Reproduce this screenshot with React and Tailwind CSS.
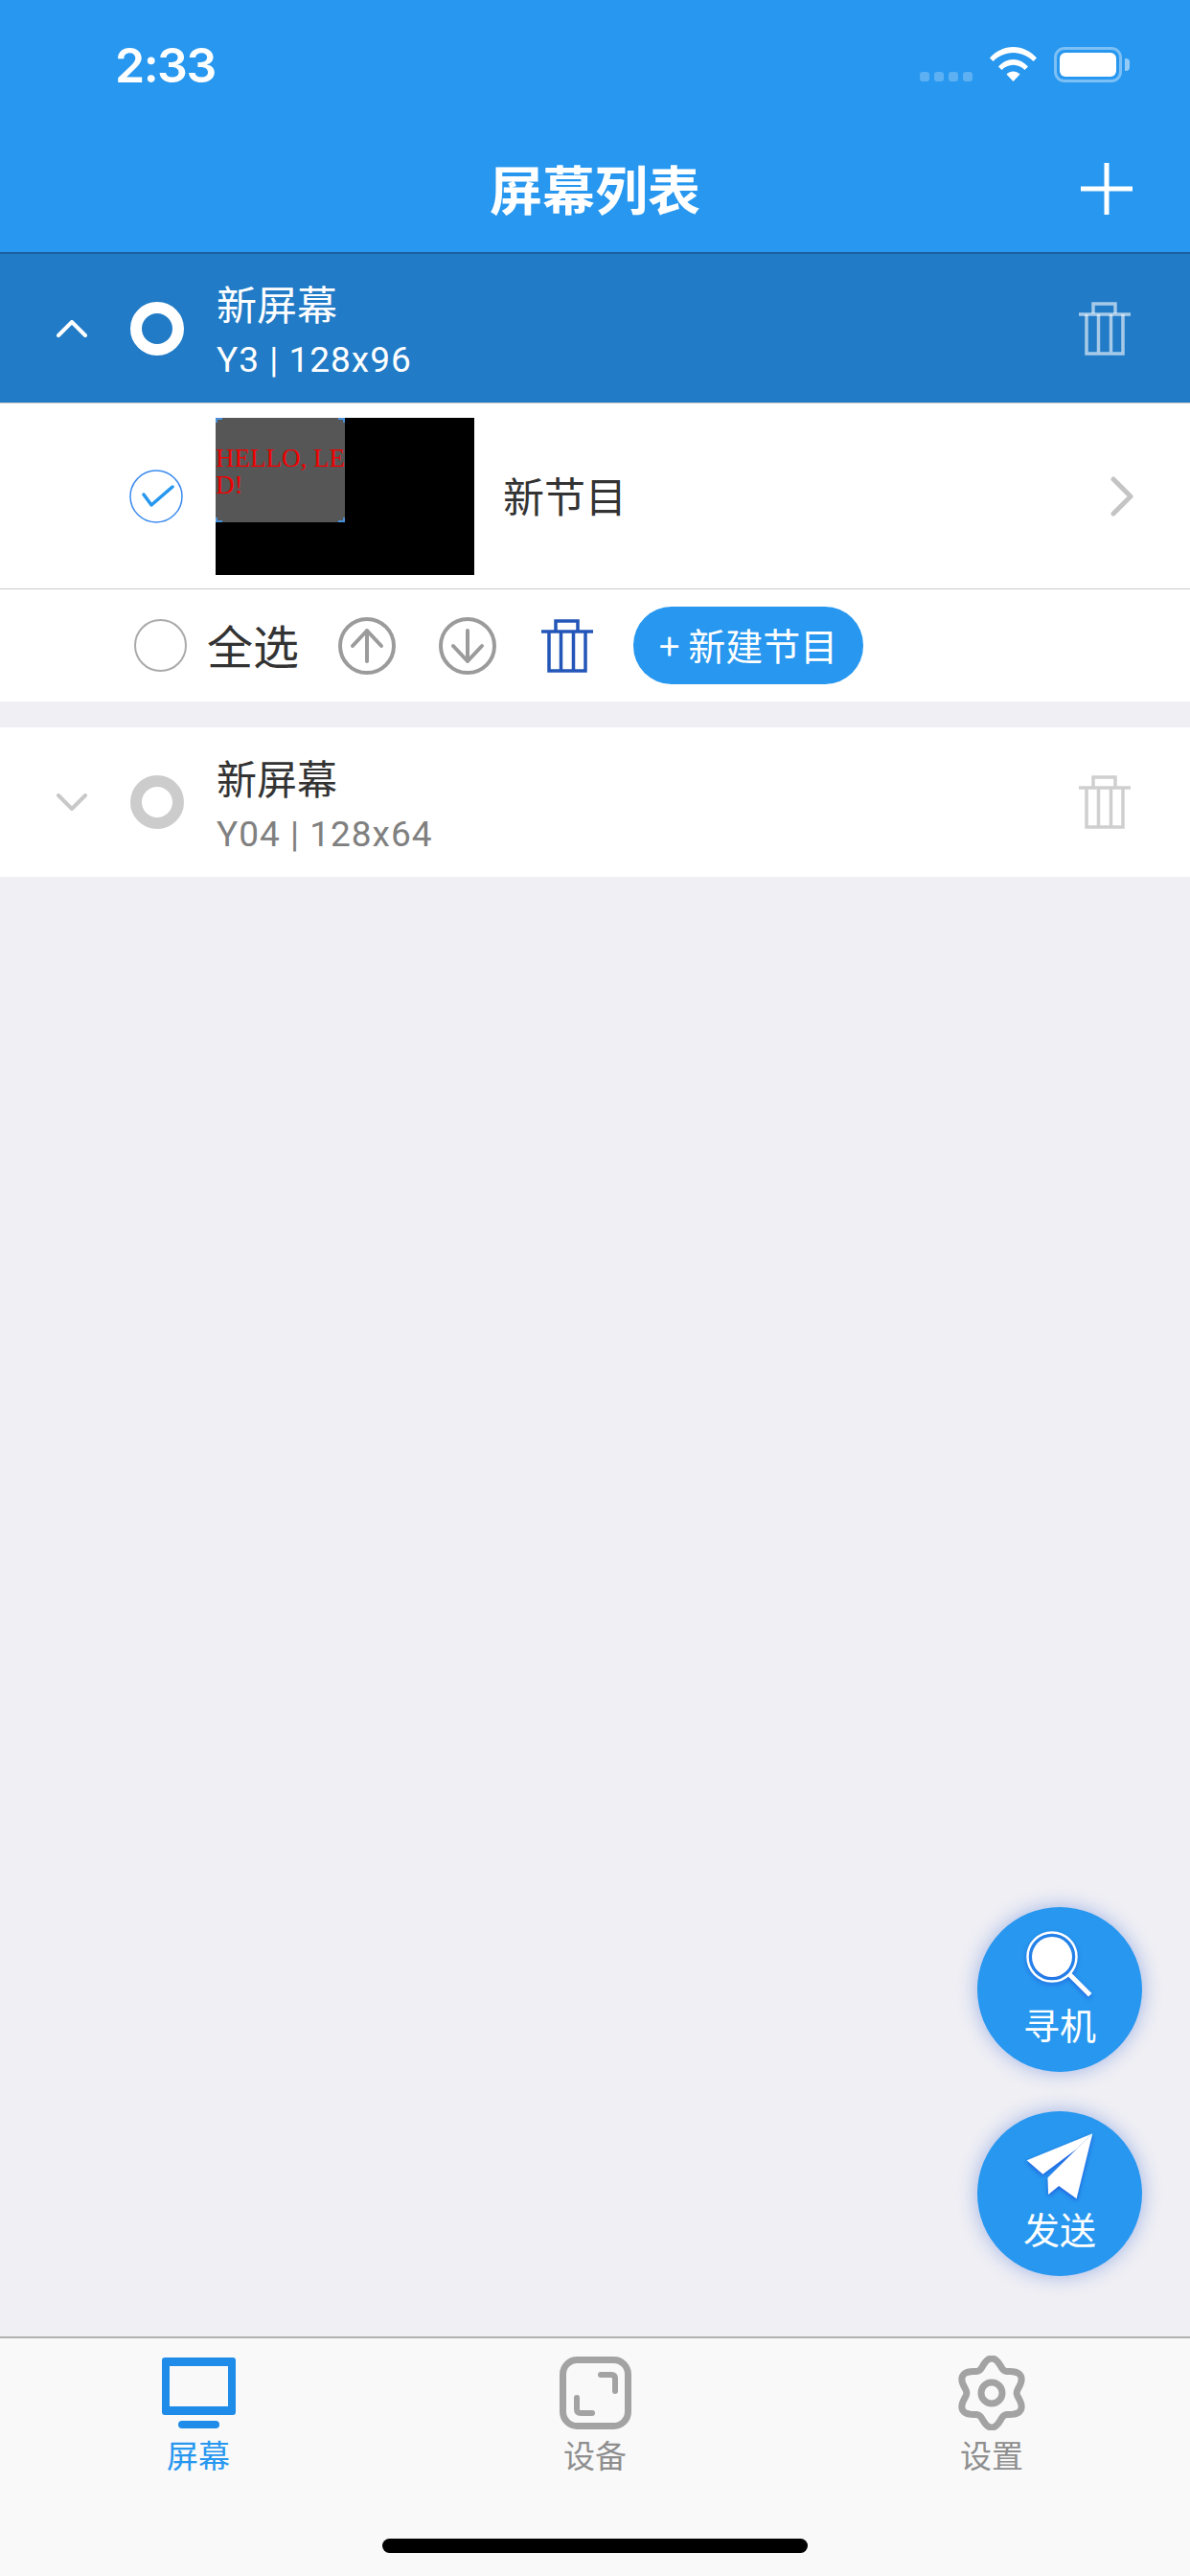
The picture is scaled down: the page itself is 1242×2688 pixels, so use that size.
const font = { fontFamily: '"Noto Sans CJK SC", sans-serif' };

// six lobed outline for the settings tab
const gearPath = (() => {
    const pts = [];
    for (let i = 0; i < 120; i++) {
        const a = (i / 120) * Math.PI * 2;
        const r = 31.5 + 4.5 * Math.cos(6 * (a + Math.PI / 2));
        pts.push(`${(39 + r * 0.97 * Math.cos(a)).toFixed(2)} ${(39 + r * Math.sin(a)).toFixed(2)}`);
    }
    return `M${pts.join('L')}Z`;
})();

const Trash = ({ className, sw = 3.5 }) => (
    <svg viewBox="0 0 54 56" className={className} fill="none" stroke="currentColor" strokeWidth={sw}>
        <path d="M15 12V2h23v10" />
        <path d="M0 13h54" />
        <path d="M8 13v41h38V13M20.5 13v41M33.5 13v41" />
    </svg>
);

const CircleArrow = ({ down }) => (
    <svg viewBox="0 0 60 60" className="w-[60px] h-[60px] text-[#9b9b9b]" fill="none" stroke="currentColor" strokeWidth="4" strokeLinecap="round" strokeLinejoin="round">
        <circle cx="30" cy="30" r="28" />
        {down ? <path d="M30 14v32M15 30l15 16 15-16" /> : <path d="M30 46V14M15 30l15-16 15 16" />}
    </svg>
);

const Chevron = ({ up, className }) => (
    <svg viewBox="0 0 32 18" className={`w-[32px] h-[18px] shrink-0 ${className}`} fill="none" stroke="currentColor" strokeWidth="4" strokeLinecap="round" strokeLinejoin="round">
        {up ? <path d="M2 16L16 2l14 14" /> : <path d="M2 2l14 14L30 2" />}
    </svg>
);

const ScreenRow = ({ active, name, info }) => (
    <div className={`flex items-center pl-[59px] pr-[62px] ${active ? 'h-[155px] bg-[#217BC6]' : 'h-[156px] bg-white'}`}>
        <Chevron up={active} className={active ? 'text-white' : 'text-[#c8c8c8]'} />
        <div className={`ml-[45px] w-[56px] h-[56px] rounded-full border-[12px] ${active ? 'border-white bg-[#217BC6]' : 'border-[#cccccc] bg-white'}`} />
        <div className="ml-[34px] flex-1 pt-[6px]">
            <div className={`text-[42px] leading-[56px] -mt-[2px] ${active ? 'text-white' : 'text-[#333333]'}`}>{name}</div>
            <div className={`text-[37px] leading-[50px] mt-[7px] font-['Roboto'] tracking-[1px] ${active ? 'text-white' : 'text-[#808080]'}`}>{info}</div>
        </div>
        <Trash className={`w-[54px] h-[56px] ${active ? 'text-white/60' : 'text-[#cfcfcf]'}`} />
    </div>
);

const Fab = ({ label, children }) => (
    <div className="w-[172px] h-[172px] rounded-full bg-[#2797EF] shadow-[0_0_20px_rgba(40,90,210,0.4)] flex flex-col items-center pt-[28px]">
        <div className="h-[71px]">{children}</div>
        <div className="text-[38px] leading-[46px] text-white">{label}</div>
    </div>
);

const TabItem = ({ label, active, children }) => (
    <div className="flex flex-col items-center w-[240px]">
        <div className="h-[84px] flex items-center">{children}</div>
        <div className={`text-[33px] leading-[44px] ${active ? 'text-[#2797EF]' : 'text-[#8e8e8e]'}`}>{label}</div>
    </div>
);

export default function App() {
    return (
        <div style={font} className="relative w-[1242px] h-[2688px] flex flex-col bg-[#EFEFF4] overflow-hidden">
            {/* header */}
            <div className="bg-[#2797EF] h-[265px] border-b-2 border-[#1B5F9F] shrink-0">
                <div className="h-[132px] flex items-start pl-[120px] pr-[63px] pt-[49px]">
                    <div className="text-[50px] leading-[38px] font-semibold text-white font-['Inter'] tracking-[-1.5px] flex-1">2:33</div>
                    <div className="flex items-end gap-[5px] h-[36px] mr-[18px]">
                        <div className="w-[10px] h-[10px] rounded-[3px] bg-white/25" />
                        <div className="w-[10px] h-[10px] rounded-[3px] bg-white/25" />
                        <div className="w-[10px] h-[10px] rounded-[3px] bg-white/25" />
                        <div className="w-[10px] h-[10px] rounded-[3px] bg-white/25" />
                    </div>
                    <svg viewBox="0 0 49 36" className="w-[49px] h-[36px] mr-[18px]" fill="white">
                        <path d="M0 11.5C6 4.5 15 0 24.5 0S43 4.500 49 11.500L45.500 15C40 9.500 32.500 6 24.500 6S9 9.500 3.500 15Z" />
                        <path d="M9 20.500C13 16 18.500 13 24.500 13S36 16 40 20.500L36.500 24C33.500 21 29 18.800 24.500 18.800S15.500 21 12.500 24Z" />
                        <path d="M17.500 28.500C19.500 26.800 22 25.500 24.500 25.500S29.500 26.800 31.500 28.500L24.500 36Z" />
                    </svg>
                    <div className="flex items-center">
                        <div className="w-[71px] h-[37px] rounded-[11px] border-[3px] border-white/40 p-[3px]">
                            <div className="w-full h-full rounded-[6px] bg-white" />
                        </div>
                        <div className="ml-[3px] w-[5px] h-[13px] rounded-r-[4px] bg-white/50" />
                    </div>
                </div>
                <div className="h-[131px] grid grid-cols-[1fr_auto_1fr] items-center">
                    <div />
                    <div className="text-[55px] font-bold text-white leading-[64px] -mt-[5px]">屏幕列表</div>
                    <div className="flex justify-end pr-[60px] -mt-[2px]">
                        <svg viewBox="0 0 54 54" className="w-[54px] h-[54px]" stroke="white" strokeWidth="5">
                            <path d="M27 0v54M0 27h54" />
                        </svg>
                    </div>
                </div>
            </div>

            <ScreenRow active name="新屏幕" info="Y3 | 128x96" />

            {/* program row */}
            <div className="bg-white h-[195px] border-y border-[#c8c8c8] flex items-center pl-[135px] pr-[59px]">
                <svg viewBox="0 0 56 56" className="w-[56px] h-[56px]" fill="none">
                    <circle cx="28" cy="28" r="27" stroke="#3B8BF0" strokeWidth="1.500" />
                    <path d="M15 26l8 11 22-19" stroke="#2797EF" strokeWidth="3.500" strokeLinecap="round" strokeLinejoin="round" />
                </svg>
                <div className="ml-[34px] w-[270px] h-[164px] bg-black">
                    <div className="relative w-[135px] h-[109px] bg-[#565656] pt-[28px] font-['Liberation_Serif'] text-[27px] leading-[28px] text-[#f00000] break-all">
                        HELLO, LED!
                        <span className="absolute left-0 top-0 w-[7px] h-[5px] border-l-2 border-t-2 border-[#4A90D9]" />
                        <span className="absolute right-0 top-0 w-[7px] h-[5px] border-r-2 border-t-2 border-[#4A90D9]" />
                        <span className="absolute left-0 bottom-0 w-[7px] h-[5px] border-l-2 border-b-2 border-[#4A90D9]" />
                        <span className="absolute right-0 bottom-0 w-[7px] h-[5px] border-r-2 border-b-2 border-[#4A90D9]" />
                    </div>
                </div>
                <div className="ml-[30px] flex-1 text-[43px] leading-[56px] -mt-[4px] text-[#333333]">新节目</div>
                <svg viewBox="0 0 24 42" className="w-[24px] h-[42px]" fill="none" stroke="#c4c4c4" strokeWidth="5" strokeLinecap="round" strokeLinejoin="round">
                    <path d="M3 3l18 18L3 39" />
                </svg>
            </div>

            {/* actions row */}
            <div className="bg-white h-[117px] flex items-center pl-[140px]">
                <div className="w-[55px] h-[55px] rounded-full border-2 border-[#aaaaaa]" />
                <div className="ml-[21px] text-[48px] leading-[60px] -mt-[4px] text-[#333333]">全选</div>
                <div className="ml-[41px]"><CircleArrow /></div>
                <div className="ml-[45px]"><CircleArrow down /></div>
                <div className="ml-[47px]"><Trash className="w-[54px] h-[56px] text-[#2356B8]" /></div>
                <button className="ml-[42px] w-[240px] h-[81px] rounded-[40px] bg-[#2797EF] text-white text-[39px] leading-[50px] pb-[3px]">+ 新建节目</button>
            </div>

            <div className="h-[27px] shrink-0" />

            <ScreenRow name="新屏幕" info="Y04 | 128x64" />

            <div className="flex-1" />

            {/* tab bar */}
            <div className="bg-[#F9F9F9] h-[250px] border-t-2 border-[#b0b0b0] shrink-0 flex flex-col">
                <div className="flex justify-between pl-[87px] pt-[15px] w-[1155px]">
                    <TabItem label="屏幕" active>
                        <svg viewBox="0 0 77 74" className="w-[77px] h-[74px]" fill="#1E8CE8">
                            <path fillRule="evenodd" d="M3 0h71a3 3 0 0 1 3 3v54a3 3 0 0 1-3 3H3a3 3 0 0 1-3-3V3a3 3 0 0 1 3-3ZM8 9v42h61V9Z" />
                            <rect x="17" y="66" width="43" height="8" rx="4" />
                        </svg>
                    </TabItem>
                    <TabItem label="设备">
                        <svg viewBox="0 0 75 76" className="w-[75px] h-[76px]" fill="none" stroke="#a3a3a3" strokeLinecap="round" strokeLinejoin="round">
                            <rect x="3.500" y="3.500" width="68" height="69" rx="15" strokeWidth="7" />
                            <path d="M43 19h11q4 0 4 4v13" strokeWidth="6" />
                            <path d="M18 43v12q0 4 4 4h12" strokeWidth="6" />
                        </svg>
                    </TabItem>
                    <TabItem label="设置">
                        <svg viewBox="0 0 78 78" className="w-[78px] h-[78px]" fill="none" stroke="#a3a3a3" strokeWidth="7">
                            <path d={gearPath} strokeLinejoin="round" />
                            <circle cx="39" cy="39" r="11" />
                        </svg>
                    </TabItem>
                </div>
                <div className="mt-auto mb-[24px] mx-auto w-[444px] h-[15px] rounded-full bg-black" />
            </div>

            {/* floating buttons */}
            <div className="absolute left-[1020px] top-[1990px] flex flex-col gap-[41px]">
                <Fab label="寻机">
                    <svg viewBox="0 0 76 76" className="w-[76px] h-[76px] -mt-[6px]" fill="none" style={{ filter: 'drop-shadow(0 2px 2px rgba(30,80,220,0.7))' }}>
                        <circle cx="30" cy="30" r="25.500" stroke="white" strokeWidth="2.500" />
                        <circle cx="30" cy="30" r="21" fill="white" />
                        <path d="M50 50l18 18" stroke="white" strokeWidth="5" strokeLinecap="square" />
                    </svg>
                </Fab>
                <Fab label="发送">
                    <svg viewBox="270 790 215 215" className="w-[72px] h-[72px] -mt-[7px]" fill="white" style={{ filter: 'drop-shadow(0 2px 2px rgba(30,80,220,0.8))' }}>
                        <path d="M480 797L275 880L325 924L430 845Z" strokeLinejoin="round" />
                        <path d="M480 797L430 1000L375 960L342 987L340 935L430 845Z" strokeLinejoin="round" />
                    </svg>
                </Fab>
            </div>
        </div>
    );
}
